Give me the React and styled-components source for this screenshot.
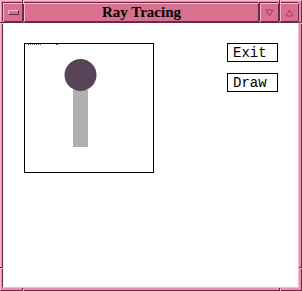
import React from "react";
import styled, { createGlobalStyle } from "styled-components";

const light = "#ffb4d2";
const pink = "#ec8cb4";
const titlePink = "#d8708e";
const dark = "#6a2a42";

const GlobalStyle = createGlobalStyle`
  html, body {
    margin: 0;
    padding: 0;
    background: #ffffff;
  }
`;

const Frame = styled.div`
  position: relative;
  width: 302px;
  height: 291px;
  box-sizing: border-box;
  display: flex;
  flex-direction: column;
  background: ${pink};
  border: 1px solid;
  border-color: ${light} ${dark} ${dark} ${light};
  padding: 1px 2px 2px 1px;
`;

// resize-handle breaks in the frame border
const Notch = styled.div`
  position: absolute;
  background: ${dark};
  box-shadow: 1px 1px 0 ${light};
  width: ${(p) => (p.$v ? 1 : 3)}px;
  height: ${(p) => (p.$v ? 3 : 1)}px;
  ${(p) => p.$pos}
`;

const TitleBar = styled.div`
  height: 20px;
  box-sizing: border-box;
  display: flex;
  gap: 1px;
  padding: 1px 0 0 1px;
`;

const TitleButton = styled.div`
  width: ${(p) => p.$w || 19}px;
  flex: ${(p) => (p.$grow ? 1 : "none")};
  box-sizing: border-box;
  display: flex;
  align-items: center;
  justify-content: center;
  background: ${titlePink};
  border: 1px solid;
  border-color: ${light} ${dark} ${dark} ${light};
  box-shadow: -1px -1px 0 ${dark};
`;

const Title = styled.span`
  font-family: "Liberation Serif", "DejaVu Serif", serif;
  font-weight: bold;
  font-size: 15px;
  color: #000;
  line-height: 1;
`;

const MenuBar = styled.div`
  width: 9px;
  height: 3px;
  border: 1px solid;
  border-color: ${light} ${dark} ${dark} ${light};
  background: ${titlePink};
`;

const Content = styled.div`
  flex: 1;
  background: #ffffff;
  border: 1px solid;
  border-color: ${dark} ${light} ${light} ${dark};
  display: flex;
  align-items: flex-start;
  padding: 20px 0 0 21px;
`;

const Canvas = styled.div`
  width: 130px;
  height: 130px;
  box-sizing: border-box;
  border: 1px solid #000;
  flex: none;

  svg {
    display: block;
  }
`;

const Controls = styled.div`
  display: flex;
  flex-direction: column;
  gap: 11px;
  margin-left: 73px;
`;

const Button = styled.button`
  width: 51px;
  height: 19px;
  box-sizing: border-box;
  border: 1px solid #000;
  background: #fff;
  color: #000;
  font-family: "Liberation Mono", "DejaVu Sans Mono", monospace;
  font-size: 14px;
  line-height: 15px;
  padding: 2px 0 0 5px;
  text-align: left;
  border-radius: 0;
  cursor: pointer;
`;

const Triangle = ({ up }) => (
  <svg width="9" height="8" viewBox="0 0 9 8">
    <polygon
      points={up ? "4.5,1 8,7 1,7" : "1,1 8,1 4.5,7"}
      fill="none"
      stroke="#a83858"
      strokeWidth="1"
    />
  </svg>
);

const App = () => (
  <>
    <GlobalStyle />
    <Frame>
      <Notch $v $pos="left: 21px; top: -1px;" />
      <Notch $v $pos="left: 278px; top: -1px;" />
      <Notch $v $pos="left: 21px; bottom: -1px;" />
      <Notch $v $pos="left: 278px; bottom: -1px;" />
      <Notch $pos="left: -1px; top: 21px;" />
      <Notch $pos="right: -1px; top: 21px;" />
      <Notch $pos="left: -1px; top: 266px;" />
      <Notch $pos="right: -1px; top: 266px;" />
      <TitleBar>
        <TitleButton $w={20}>
          <MenuBar />
        </TitleButton>
        <TitleButton $grow>
          <Title>Ray Tracing</Title>
        </TitleButton>
        <TitleButton>
          <Triangle />
        </TitleButton>
        <TitleButton>
          <Triangle up />
        </TitleButton>
      </TitleBar>
      <Content>
        <Canvas>
          <svg width="128" height="128" viewBox="0 0 128 128">
            {/* scan dots left on the first line */}
            {[3, 5, 7, 9, 11, 13, 15, 31, 32].map((x) => (
              <rect key={x} x={x} y="0" width="1" height="1" fill="#4a6272" />
            ))}
            <rect x="48" y="46" width="15" height="57" fill="#b0b0b0" />
            <circle cx="55.5" cy="31" r="16" fill="#574459" />
          </svg>
        </Canvas>
        <Controls>
          <Button>Exit</Button>
          <Button>Draw</Button>
        </Controls>
      </Content>
    </Frame>
  </>
);

export default App;
